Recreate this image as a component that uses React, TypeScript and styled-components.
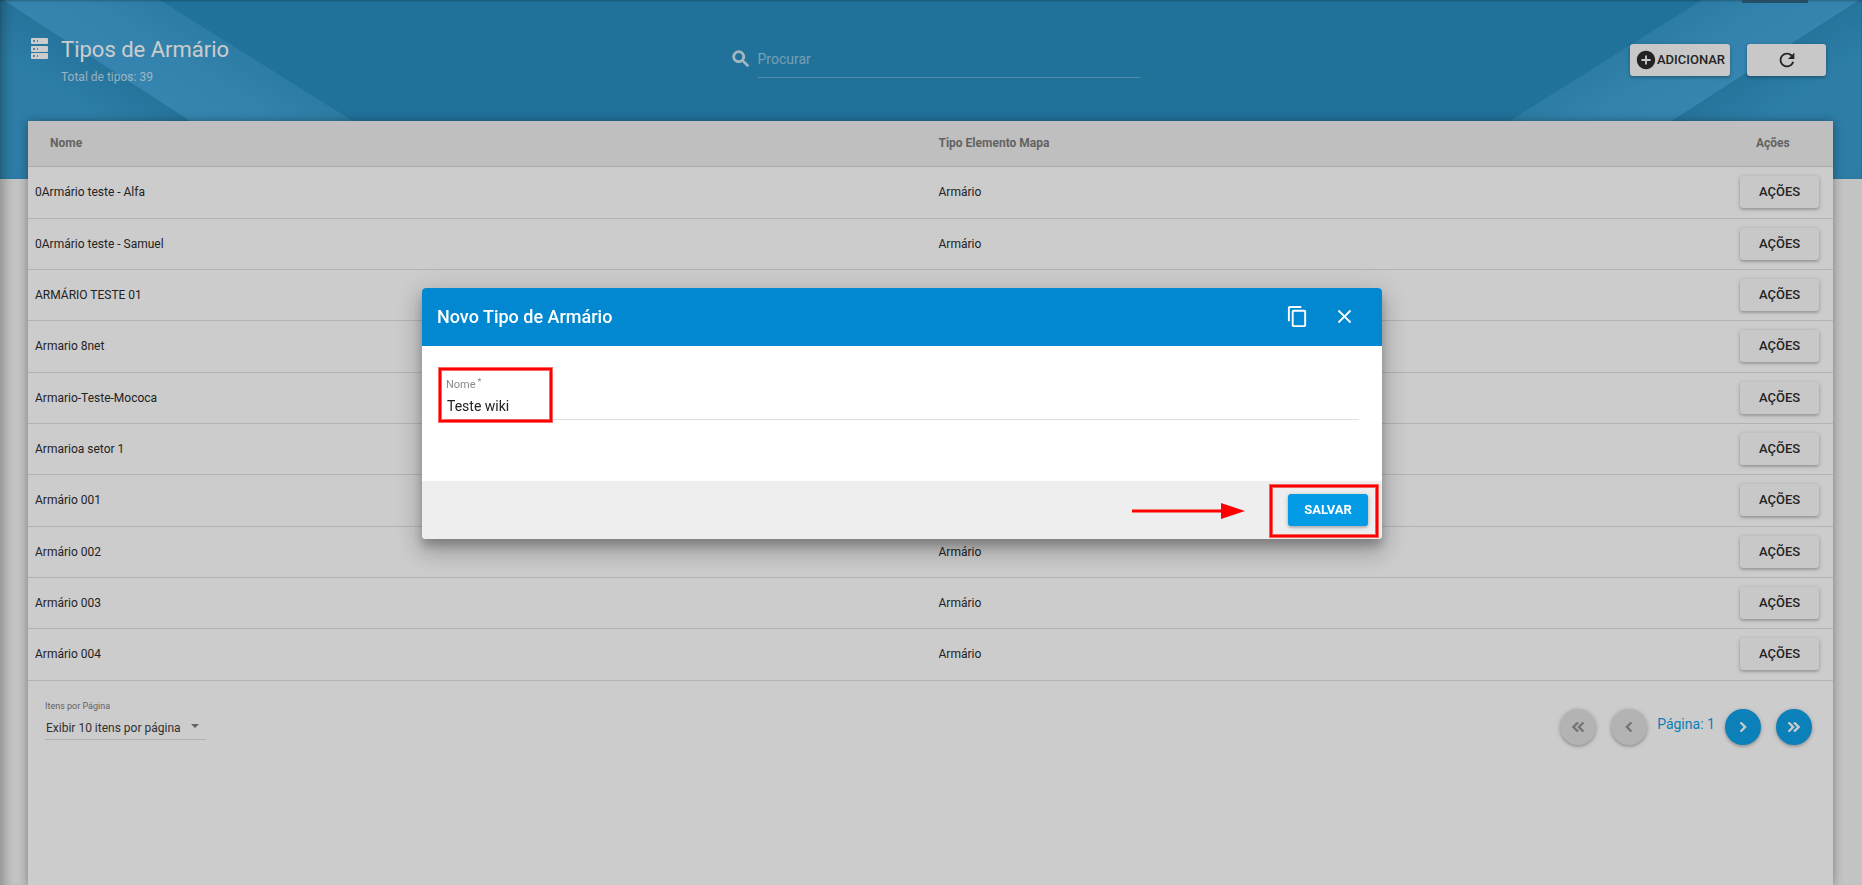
import React from "react";
import styled, { createGlobalStyle } from "styled-components";
import {
  MdAddCircle,
  MdChevronLeft,
  MdChevronRight,
  MdClose,
  MdContentCopy,
  MdKeyboardDoubleArrowLeft,
  MdKeyboardDoubleArrowRight,
  MdRefresh,
  MdSearch,
} from "react-icons/md";

const GlobalStyle = createGlobalStyle`
  *, *::before, *::after { box-sizing: border-box; }
  body {
    margin: 0;
    background: #f5f5f5;
    color: #212121;
    font-family: Roboto, "Liberation Sans", sans-serif;
    font-size: 12px;
  }
  button, input, select { font-family: inherit; color: inherit; }
`;

const raised = "0 1px 4px rgba(0, 0, 0, 0.26), 0 2px 2px rgba(0, 0, 0, 0.1)";

const Page = styled.div`
  position: relative;
  display: flex;
  flex-direction: column;
  min-height: 100vh;
  padding: 0 29px 0 28px;
  box-shadow: inset 12px 0 12px -8px rgba(0, 0, 0, 0.3);
`;

const Banner = styled.div`
  position: absolute;
  inset: 0 0 auto 0;
  height: 179px;
  overflow: hidden;
  background: #1d89bf;
`;

const Ribbon = styled.svg<{ $side: "left" | "right" }>`
  position: absolute;
  top: 0;
  ${(p) => p.$side}: 0;
  ${(p) => (p.$side === "right" ? "transform: scaleX(-1);" : "")}
`;

const BannerShade = styled.div`
  position: absolute;
  inset: 0;
  box-shadow: inset 12px 0 12px -8px rgba(0, 0, 0, 0.3), inset 0 1px 2px rgba(0, 0, 0, 0.25);
`;

const TopTab = styled.div`
  position: absolute;
  top: 0;
  right: 54px;
  width: 66px;
  height: 3px;
  background: #235a77;
`;

const Toolbar = styled.header`
  position: relative;
  display: grid;
  grid-template-columns: 1fr 410px 1fr;
  height: 121px;
  color: #fff;
`;

const Heading = styled.div`
  display: flex;
  gap: 13px;
  padding: 36px 0 0 3px;
`;

const HeadingIcon = styled.svg`
  margin-top: 2px;
`;

const Title = styled.h1`
  margin: 0;
  font-size: 22px;
  font-weight: 400;
  line-height: 28px;
`;

const Subtitle = styled.p`
  margin: 5px 0 0;
  font-size: 12px;
  line-height: 16px;
  color: rgba(255, 255, 255, 0.7);
`;

const Search = styled.label`
  display: flex;
  gap: 6px;
  align-items: center;
  height: 38px;
  margin: 40px -4px 0 4px;
  color: rgba(255, 255, 255, 0.75);
`;

const SearchIcon = styled(MdSearch)`
  path:not([fill="none"]) { stroke: currentColor; stroke-width: 1; }
  path[fill="none"] { stroke: none; }
`;

const SearchInput = styled.input`
  flex: 1;
  min-width: 0;
  height: 38px;
  padding: 0;
  border: 0;
  border-bottom: 1px solid rgba(255, 255, 255, 0.3);
  background: none;
  font-size: 14px;
  outline: none;
  &::placeholder { color: rgba(255, 255, 255, 0.5); opacity: 1; }
`;

const Actions = styled.div`
  display: flex;
  justify-content: flex-end;
  gap: 17px;
  padding: 44px 7px 0 0;
`;

const Button = styled.button<{ $width: number; $primary?: boolean }>`
  display: flex;
  align-items: center;
  justify-content: center;
  width: ${(p) => p.$width}px;
  height: 32px;
  padding: 0 0 1px;
  border: 0;
  border-radius: 3px;
  background: ${(p) => (p.$primary ? "#039be5" : "#fafafa")};
  color: ${(p) => (p.$primary ? "#fff" : "#212121")};
  font-size: 13px;
  font-weight: ${(p) => (p.$primary ? 700 : 500)};
  white-space: nowrap;
  box-shadow: ${raised};
`;

const Panel = styled.main`
  position: relative;
  flex: 1;
  background: #fff;
  box-shadow: 0 1px 10px rgba(0, 0, 0, 0.4);
`;

const Table = styled.table`
  width: 100%;
  table-layout: fixed;
  border-collapse: separate;
  border-spacing: 0;
`;

const Th = styled.th<{ $width?: string; $indent: number }>`
  width: ${(p) => p.$width ?? "auto"};
  height: 46px;
  padding: 0 0 2px ${(p) => p.$indent}px;
  border-bottom: 1px solid #d4d4d4;
  background: #eee;
  color: #757575;
  font-weight: 700;
  line-height: 14px;
  text-align: left;
`;

const Row = styled.tr`
  height: 51px;
  &:nth-child(3n + 1) { height: 52px; }
`;

const Td = styled.td<{ $indent: number }>`
  padding: 0 0 1px ${(p) => p.$indent}px;
  border-bottom: 1px solid #dedede;
  line-height: 14px;
`;

const Footer = styled.footer`
  display: flex;
  justify-content: space-between;
  padding: 19px 21px 0 17px;
`;

const PageSize = styled.label`
  display: flex;
  flex-direction: column;
  width: 161px;
  color: #757575;
  font-size: 9px;
  line-height: 12px;
`;

const SelectLine = styled.span`
  display: grid;
  align-items: center;
  margin-top: 4px;
  border-bottom: 1px solid #dedede;
`;

const Select = styled.select`
  grid-area: 1 / 1;
  width: 100%;
  height: 23px;
  padding: 0 0 0 1px;
  border: 0;
  background: none;
  appearance: none;
  color: #333;
  font-size: 12px;
`;

const Caret = styled.svg`
  grid-area: 1 / 1;
  justify-self: end;
  margin: 0 7px 4px 0;
  pointer-events: none;
`;

const Pager = styled.nav`
  display: flex;
  padding-top: 9px;
`;

const Round = styled.button`
  display: flex;
  align-items: center;
  justify-content: center;
  width: 36px;
  height: 36px;
  padding: 0;
  border: 0;
  border-radius: 50%;
  background: #039be5;
  color: #fff;
  box-shadow: ${raised};
  & + & { margin-left: 15px; }
  &:disabled { background: #dedede; color: #8c8c8c; }
  path[fill="none"] { stroke: none; }
  path:not([fill="none"]) { stroke: currentColor; stroke-width: 1; }
`;

const PageLabel = styled.span`
  width: 78px;
  color: #039be5;
  font-size: 14px;
  line-height: 31px;
  text-align: center;
`;

const Overlay = styled.div`
  position: fixed;
  inset: 0;
  display: flex;
  align-items: center;
  justify-content: center;
  padding: 0 58px 58px 0;
  background: rgba(40, 40, 40, 0.24);
`;

const Dialog = styled.section`
  position: relative;
  width: 960px;
  max-width: 90%;
  border-radius: 4px;
  background: #fff;
  box-shadow: 0 7px 9px rgba(0, 0, 0, 0.2), 0 14px 21px 2px rgba(0, 0, 0, 0.14),
    0 5px 26px 4px rgba(0, 0, 0, 0.12);
`;

const DialogHeader = styled.div`
  display: flex;
  align-items: center;
  height: 58px;
  padding: 0 26px 2px 15px;
  border-radius: 4px 4px 0 0;
  background: #0288d1;
  color: #fff;
`;

const DialogTitle = styled.h2`
  flex: 1;
  margin: 0;
  font-size: 18px;
  font-weight: 500;
`;

const IconButton = styled.button`
  display: flex;
  padding: 0;
  border: 0;
  background: none;
  & + & { margin-left: 24px; }
`;

const DialogBody = styled.div`
  height: 135px;
  padding: 32px 23px 0 24px;
`;

const Field = styled.label`
  display: block;
  color: #8a8a8a;
  font-size: 11px;
  line-height: 14px;
`;

const Required = styled.span`
  margin-left: 2px;
  font-size: 9px;
  vertical-align: 3px;
  line-height: 9px;
`;

const FieldInput = styled.input`
  display: block;
  width: 100%;
  height: 28px;
  padding: 0 0 0 1px;
  border: 0;
  border-bottom: 1px solid #e0e0e0;
  background: none;
  color: #212121;
  font-size: 14px;
  outline: none;
`;

const DialogFooter = styled.div`
  display: flex;
  align-items: center;
  justify-content: flex-end;
  height: 58px;
  padding: 0 14px 0 0;
  border-radius: 0 0 4px 4px;
  background: #eee;
`;

const Highlight = styled.div<{ $width: number; $height: number }>`
  position: absolute;
  width: ${(p) => p.$width}px;
  height: ${(p) => p.$height}px;
  border: 2px solid #f00;
  box-shadow: 0 0 0 1px rgba(255, 0, 0, 0.6), inset 0 0 0 1px rgba(255, 0, 0, 0.6);
  pointer-events: none;
`;

const FieldHighlight = styled(Highlight)`
  top: 80px;
  left: 17px;
`;

const SaveHighlight = styled(Highlight)`
  right: 4px;
  bottom: 2px;
`;

const Arrow = styled.svg`
  position: absolute;
  right: 137px;
  bottom: 20px;
`;

const rows = [
  "0Armário teste - Alfa",
  "0Armário teste - Samuel",
  "ARMÁRIO TESTE 01",
  "Armario 8net",
  "Armario-Teste-Mococa",
  "Armarioa setor 1",
  "Armário 001",
  "Armário 002",
  "Armário 003",
  "Armário 004",
];

function BannerRibbon({ side }: { side: "left" | "right" }) {
  const id = (name: string) => `${name}-${side}`;
  return (
    <Ribbon $side={side} width="446" height="179" viewBox="0 0 446 179" aria-hidden="true">
      <defs>
        <linearGradient id={id("band")} gradientUnits="userSpaceOnUse" x1="96" y1="60" x2="142" y2="-14">
          <stop offset="0" stopColor="#39a2da" />
          <stop offset="0.5" stopColor="#369fd7" />
          <stop offset="1" stopColor="#2d95cb" />
        </linearGradient>
        <linearGradient id={id("low")} gradientUnits="userSpaceOnUse" x1="96" y1="60" x2="70" y2="100">
          <stop offset="0" stopColor="#258cc1" />
          <stop offset="1" stopColor="#2e98cf" />
        </linearGradient>
      </defs>
      <path d="M0 -2L280 179H0z" fill={`url(#${id("low")})`} />
      <path d="M3 0H160L445 179H280z" fill={`url(#${id("band")})`} />
    </Ribbon>
  );
}

function ServerIcon() {
  return (
    <HeadingIcon width="17" height="21" viewBox="0 0 17 21" aria-hidden="true">
      {[0, 8, 15].map((y) => (
        <g key={y}>
          <rect y={y} width="17" height="6" rx="1" fill="#fff" />
          <rect x="2" y={y + 2} width="2" height="2" fill="#5aa9cf" />
          <rect x="6" y={y + 2} width="1" height="2" fill="#5aa9cf" />
        </g>
      ))}
    </HeadingIcon>
  );
}

export default function App() {
  return (
    <>
      <GlobalStyle />
      <Page>
        <Banner>
          <BannerRibbon side="left" />
          <BannerRibbon side="right" />
          <BannerShade />
          <TopTab />
        </Banner>
        <Toolbar>
          <Heading>
            <ServerIcon />
            <div>
              <Title>Tipos de Armário</Title>
              <Subtitle>Total de tipos: 39</Subtitle>
            </div>
          </Heading>
          <Search>
            <SearchIcon size={22} aria-hidden="true" />
            <SearchInput type="search" placeholder="Procurar" aria-label="Procurar" />
          </Search>
          <Actions>
            <Button type="button" $width={100}>
              <MdAddCircle size={22} aria-hidden="true" />
              ADICIONAR
            </Button>
            <Button type="button" $width={79} aria-label="Atualizar">
              <MdRefresh size={22} />
            </Button>
          </Actions>
        </Toolbar>
        <Panel>
          <Table>
            <thead>
              <tr>
                <Th $width="50%" $indent={22}>Nome</Th>
                <Th $indent={8}>Tipo Elemento Mapa</Th>
                <Th $width="93px" $indent={16}>Ações</Th>
              </tr>
            </thead>
            <tbody>
              {rows.map((name) => (
                <Row key={name}>
                  <Td $indent={7}>{name}</Td>
                  <Td $indent={8}>Armário</Td>
                  <Td $indent={0}>
                    <Button type="button" $width={79}>AÇÕES</Button>
                  </Td>
                </Row>
              ))}
            </tbody>
          </Table>
          <Footer>
            <PageSize>
              Itens por Página
              <SelectLine>
                <Select defaultValue="10">
                  <option value="10">Exibir 10 itens por página</option>
                </Select>
                <Caret width="8" height="4" viewBox="0 0 8 4" aria-hidden="true">
                  <path d="M0 0h8L4 4z" fill="#757575" />
                </Caret>
              </SelectLine>
            </PageSize>
            <Pager aria-label="Paginação">
              <Round type="button" disabled aria-label="Primeira página">
                <MdKeyboardDoubleArrowLeft size={20} />
              </Round>
              <Round type="button" disabled aria-label="Página anterior">
                <MdChevronLeft size={20} />
              </Round>
              <PageLabel>Página: 1</PageLabel>
              <Round type="button" aria-label="Próxima página">
                <MdChevronRight size={20} />
              </Round>
              <Round type="button" aria-label="Última página">
                <MdKeyboardDoubleArrowRight size={20} />
              </Round>
            </Pager>
          </Footer>
        </Panel>
      </Page>
      <Overlay>
        <Dialog role="dialog" aria-labelledby="dialog-title">
          <DialogHeader>
            <DialogTitle id="dialog-title">Novo Tipo de Armário</DialogTitle>
            <IconButton type="button" aria-label="Copiar">
              <MdContentCopy size={23} color="#fff" />
            </IconButton>
            <IconButton type="button" aria-label="Fechar">
              <MdClose size={23} color="#fff" />
            </IconButton>
          </DialogHeader>
          <DialogBody>
            <Field>
              Nome<Required>*</Required>
              <FieldInput type="text" defaultValue="Teste wiki" required />
            </Field>
          </DialogBody>
          <DialogFooter>
            <Button type="button" $width={80} $primary>SALVAR</Button>
          </DialogFooter>
          <FieldHighlight $width={113} $height={54} />
          <SaveHighlight $width={108} $height={52} />
          <Arrow width="113" height="16" viewBox="0 0 113 16" aria-hidden="true">
            <path d="M0 6.500h89V0l24 8-24 8V9.500H0z" fill="#f00" />
          </Arrow>
        </Dialog>
      </Overlay>
    </>
  );
}
